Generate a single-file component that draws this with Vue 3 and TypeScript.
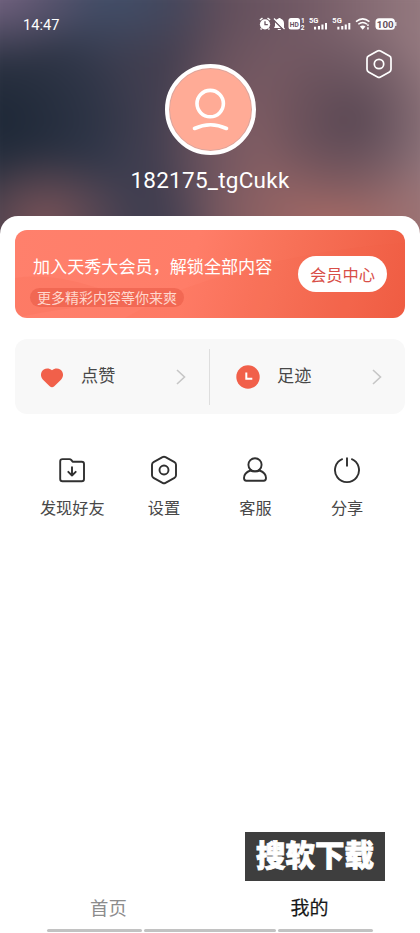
<script setup lang="ts">
interface Shortcut { label: string; icon: 'folder' | 'settings' | 'user' | 'power' }

const shortcuts: Shortcut[] = [
  { label: '发现好友', icon: 'folder' },
  { label: '设置', icon: 'settings' },
  { label: '客服', icon: 'user' },
  { label: '分享', icon: 'power' },
]
</script>

<template>
  <div class="screen">
    <header class="hero">
      <div class="backdrop"></div>
      <div class="status">
        <span class="time">14:47</span>
        <svg class="indicators" width="140" height="18" viewBox="0 0 140 18" fill="#fff">
          <circle cx="7" cy="9.3" r="5.1" />
          <path d="M1.900 5 4.500 3M12.100 5 9.500 3M3.500 13.500l-.9 1M10.500 13.500l.9 1" stroke="#fff" stroke-width="1.500" />
          <path d="M7 6.300v3.400h2.800" fill="none" stroke="#67535f" stroke-width="1.300" />
          <path d="M16 13h10V8.200c0-2.600-1.400-4-3.500-4.400V3h-2v.8C18 4.300 17 5.800 17 8.200V11zM19.800 14h3v1h-3z" />
          <path d="M15.500 4.700 25.500 14.700" stroke="#67535f" stroke-width="1.600" />
          <path d="M16 3.500 26.500 14" stroke="#fff" stroke-width="1.300" />
          <rect x="30.500" y="3" width="11.500" height="11.500" rx="2.500" />
          <text x="31.800" y="11.600" font-size="7.500" font-weight="700" fill="#67535f" textLength="9" lengthAdjust="spacingAndGlyphs">HD</text>
          <text x="43" y="8" font-size="6.500" font-weight="700">1</text>
          <text x="42.700" y="14.700" font-size="6.500" font-weight="700">2</text>
          <text x="51" y="8" font-size="7.500" font-weight="700" textLength="9.500" lengthAdjust="spacingAndGlyphs">5G</text>
          <path d="M56 11.700h2.100V14.500H56zM59.900 10.900H62v3.600h-2.100zM63.400 9.500h2.100v5h-2.100zM67 8h2v6.500h-2z" />
          <text x="74.300" y="8" font-size="7.500" font-weight="700" textLength="9.500" lengthAdjust="spacingAndGlyphs">5G</text>
          <path d="M79.300 11.700h2.100v2.800h-2.100zM83.200 10.900h2.100v3.600h-2.100zM86.700 9.500h2.100v5h-2.100zM90.300 8h2v6.500h-2z" />
          <g fill="none" stroke="#fff" stroke-width="1.500">
            <path d="M98 6.700q6.700-5.600 13.400 0M100.300 9.300q4.400-3.700 8.800 0" />
          </g>
          <path d="m101.900 11.400 2.800 3.400 2.800-3.400q-2.800-1.900-5.600 0zM109.200 9.200h1.500v1.700h-1.500zM109.200 12.200h1.500v2.300h-1.500z" />
          <rect x="117.500" y="3.300" width="19.400" height="11.400" rx="3.500" />
          <rect x="137.200" y="7" width="1.200" height="4" rx=".6" />
          <text x="118.800" y="12.500" font-size="9.800" font-weight="700" fill="#67535f" textLength="16.800" lengthAdjust="spacingAndGlyphs">100</text>
        </svg>
      </div>
      <svg class="gear" width="28" height="30" viewBox="0 0 28 30" fill="none" stroke="#fff" stroke-width="1.700">
        <path d="M12.500 2.100q1.500-.8 3 0l9 5q1.500.8 1.500 2.600v10.600q0 1.800-1.500 2.600l-9 5q-1.500.8-3 0l-9-5Q2 22.100 2 20.300V9.700Q2 7.900 3.500 7.100z" />
        <circle cx="14" cy="15" r="4.700" />
      </svg>
      <div class="avatar">
        <svg width="42" height="46" viewBox="0 0 42 46" fill="none" stroke="#fff" stroke-width="3.600" stroke-linecap="round">
          <circle cx="21.200" cy="16.600" r="13.200" />
          <path d="M5.500 41.500q16-7.500 32 0" />
        </svg>
      </div>
      <div class="name">182175_tgCukk</div>
    </header>

    <main class="panel">
      <section class="vip">
        <svg class="waves" width="390" height="88" viewBox="0 0 390 88" preserveAspectRatio="none">
          <path d="M0 48q34-5 76 8t92 13q-95 3-168 19z" fill="#f45f48" opacity=".14" />
          <path d="M150 66Q260 22 390 13v75H110z" fill="#f25e43" opacity=".08" />
        </svg>
        <div class="pitch">
          <div class="headline">加入天秀大会员，解锁全部内容</div>
          <div class="teaser">更多精彩内容等你来爽</div>
        </div>
        <button class="join">会员中心</button>
      </section>

      <section class="records">
        <div class="record">
          <svg class="mark" width="24" height="24" viewBox="0 0 24 24" fill="#f1604a">
            <path d="M12 22.300Q10.800 22.300 9.700 21.200L3 14.700C-.1 11.600.5 6.300 3.800 4.400 6.500 2.800 9.700 3.300 12 5.300c2.300-2 5.500-2.500 8.200-.9 3.300 1.900 3.900 7.200.8 10.300l-6.700 6.500Q13.200 22.300 12 22.300z" />
          </svg>
          <span>点赞</span>
          <svg class="chevron" width="10" height="16" viewBox="0 0 10 16"><path d="m1 1 7.500 7L1 15" /></svg>
        </div>
        <div class="record second">
          <svg class="mark" width="24" height="24" viewBox="0 0 24 24">
            <circle cx="12" cy="12" r="11.700" fill="#f1604a" />
            <path d="M10.300 7.500v6.300h6" fill="none" stroke="#fff" stroke-width="2" />
          </svg>
          <span>足迹</span>
          <svg class="chevron" width="10" height="16" viewBox="0 0 10 16"><path d="m1 1 7.500 7L1 15" /></svg>
        </div>
      </section>

      <nav class="shortcuts">
        <div v-for="item in shortcuts" :key="item.label" class="shortcut">
          <svg width="28" height="30" viewBox="0 0 28 30" fill="none" stroke="#303030" stroke-width="1.900" stroke-linecap="round" stroke-linejoin="round">
            <template v-if="item.icon === 'folder'">
              <path d="M4.500 4.100h7q1 0 1.700.8l1.400 1.800h9.100q2.300 0 2.300 2.300v15q0 2.300-2.300 2.300H4.500q-2.300 0-2.300-2.300V6.400q0-2.300 2.300-2.300z" />
              <path d="M14 12.200v8.300m-3.700-3.700 3.700 3.700 3.700-3.700" />
            </template>
            <template v-else-if="item.icon === 'settings'">
              <path d="M12.500 2.100q1.500-.8 3 0l9 5q1.500.8 1.500 2.600v10.600q0 1.800-1.500 2.600l-9 5q-1.500.8-3 0l-9-5Q2 22.100 2 20.300V9.700Q2 7.900 3.500 7.100z" />
              <circle cx="14" cy="15" r="4.500" />
            </template>
            <template v-else-if="item.icon === 'user'">
              <circle cx="14" cy="9.800" r="6.600" />
              <path d="M9.300 15.500C5.500 16.900 3 19.600 3 23.100 3 25 3.700 25.800 5.300 25.800h17.400c1.600 0 2.300-.8 2.300-2.700 0-3.500-2.500-6.200-6.300-7.600M9.300 15.500q4.700 1.800 9.400 0" />
            </template>
            <template v-else>
              <path d="M9.700 3.900a12 12 0 1 0 8.600 0M14 2.500v9" stroke-linecap="butt" />
            </template>
          </svg>
          <span>{{ item.label }}</span>
        </div>
      </nav>
    </main>

    <footer class="bottom">
      <div class="stamp">搜软下载</div>
      <div class="tabs">
        <span class="tab">首页</span>
        <span class="tab active">我的</span>
      </div>
      <div class="lines"><i></i><i class="mid"></i><i></i></div>
    </footer>
  </div>
</template>

<style>
body { margin: 0; background: #fff; }
</style>

<style scoped>
.screen {
  width: 420px;
  height: 933px;
  display: flex;
  flex-direction: column;
  overflow: hidden;
  background: #fff;
  color: #484848;
  font-family: "Noto Sans CJK SC", sans-serif;
}
.hero {
  position: relative;
  height: 240px;
  flex: none;
  display: flex;
  flex-direction: column;
  align-items: center;
  overflow: hidden;
}
.backdrop {
  position: absolute;
  inset: -30px;
  filter: blur(14px);
  background:
    radial-gradient(ellipse 95px 70px at 75px 250px, #7c5358, #7c535800),
    radial-gradient(ellipse 95px 95px at 382px 150px, #54434fdd, #54434f00),
    radial-gradient(ellipse 150px 85px at 365px 255px, #a66964, #a6696400),
    radial-gradient(ellipse 115px 75px at 20px 20px, #7c6989, #7c698900),
    radial-gradient(ellipse 150px 100px at 25px 150px, #1d2736, #1d273600),
    radial-gradient(ellipse 105px 65px at 145px 25px, #43506b, #43506b00),
    radial-gradient(ellipse 110px 130px at 295px 175px, #815d63, #815d6300),
    linear-gradient(90deg, #323848 30px, #363b4e 115px, #443f50 195px, #624f5c 255px, #745b66 340px, #94797f 450px);
}
.status {
  position: relative;
  align-self: stretch;
  height: 18px;
  margin-top: 15px;
  padding: 0 22px 0 23px;
  display: flex;
  align-items: center;
  justify-content: space-between;
}
.time {
  padding-top: 2px;
  color: #fff;
  font: 14.600px/18px Roboto, sans-serif;
}
.indicators { font-family: Roboto, sans-serif; }
.gear { position: absolute; left: 365px; top: 49px; }
.avatar {
  position: relative;
  width: 83px;
  height: 83px;
  margin-top: 31px;
  border: 4px solid #fff;
  border-radius: 50%;
  background: #ffab96;
  box-shadow: inset 0 0 0 1px #d8a69f;
  display: flex;
  align-items: center;
  justify-content: center;
}
.name {
  position: relative;
  margin-top: 11px;
  color: #fff;
  font: 22.500px/28px Roboto, sans-serif;
  letter-spacing: .25px;
}
.panel {
  position: relative;
  margin-top: -24px;
  padding: 14px 15px 0;
  border-radius: 18px 18px 0 0;
  background: #fff;
}
.vip {
  position: relative;
  height: 88px;
  display: flex;
  justify-content: space-between;
  border-radius: 12px;
  overflow: hidden;
  background: linear-gradient(105deg, #ff806c 0, #ff7d68 45%, #f87259 66%, #ef5d43 100%);
}
.waves { position: absolute; inset: 0; }
.pitch {
  position: relative;
  padding: 24px 0 0 18px;
}
.headline {
  color: #fff;
  font-size: 17.100px;
  line-height: 24px;
  white-space: nowrap;
}
.teaser {
  width: 154px;
  height: 19px;
  margin: 10px 0 0 -3px;
  border-radius: 10px;
  background: #e95b4899;
  color: #ffd7cd;
  font-size: 14px;
  line-height: 19px;
  text-align: center;
}
.join {
  position: relative;
  width: 89px;
  height: 36px;
  margin: 26px 18px 0 0;
  padding: 0;
  border: 0;
  border-radius: 18px;
  background: #fff;
  color: #d84e48;
  font: 16.300px/36px "Noto Sans CJK SC", sans-serif;
}
.records {
  height: 75px;
  margin-top: 21px;
  display: flex;
  align-items: center;
  border-radius: 12px;
  background: #f8f8f8;
}
.record {
  flex: 1;
  height: 56px;
  padding: 0 23px 0 25px;
  display: flex;
  align-items: center;
  font-size: 17.200px;
}
.record:first-child { flex: none; width: 146px; }
.second { border-left: 1px solid #dedede; }
.second .mark { margin-left: 1px; }
.record span { margin: 0 auto 4px 17px; }
.chevron { fill: none; stroke: #c6c6c6; stroke-width: 1.600; }
.shortcuts {
  display: grid;
  grid-template-columns: repeat(4, 91.600px);
  margin: 41px 0 0 11.500px;
}
.shortcut {
  display: flex;
  flex-direction: column;
  align-items: center;
  font-size: 16.200px;
  line-height: 24px;
}
.shortcut span { margin-top: 10px; }
.bottom {
  margin-top: auto;
  display: flex;
  flex-direction: column;
}
.stamp {
  width: 140px;
  height: 49px;
  margin-left: 245px;
  background: #3e3e3e;
  color: #fff;
  font-size: 29.500px;
  font-weight: 900;
  line-height: 42px;
  text-align: center;
  -webkit-text-stroke: .8px #fff;
}
.tabs {
  display: grid;
  grid-template-columns: 201px 201px;
  height: 48px;
  padding-left: 8px;
}
.tab {
  padding-top: 12px;
  color: #8c8c8c;
  font-size: 18.400px;
  line-height: 28px;
  text-align: center;
}
.active { color: #181818; font-size: 19px; -webkit-text-stroke: .2px #181818; }
.lines {
  display: flex;
  gap: 2px;
  height: 4px;
  padding-left: 47px;
}
.lines i { width: 95px; height: 3px; border-radius: 2px; background: #c2c2c2; }
.lines .mid { width: 132px; }
</style>
